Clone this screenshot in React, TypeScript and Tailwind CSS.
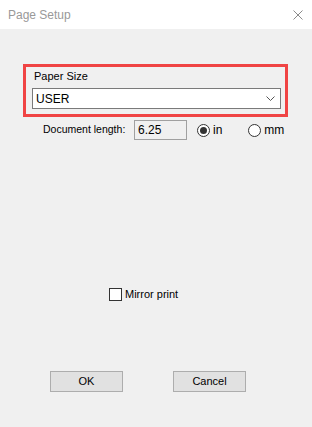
export default function App() {
  return (
    <div
      className="w-[312px] h-[427px] bg-[#f0f0f0] flex flex-col text-[11px] text-black"
      style={{ fontFamily: '"Liberation Sans", Arial, sans-serif' }}
    >
      <div className="h-[29px] bg-white flex items-center justify-between pl-[8px] pr-[9px]">
        <span className="text-[12px] text-[#999999]">Page Setup</span>
        <svg width="10" height="10" viewBox="0 0 10 10" className="text-[#8a8a8a]">
          <path d="M0.5 0.5 L9.5 9.5 M9.5 0.5 L0.5 9.5" stroke="currentColor" strokeWidth="1" />
        </svg>
      </div>

      <div className="ml-[23px] mt-[35px] w-[265px] h-[53px] border-[3px] border-[#f04444] flex flex-col">
        <div className="pl-[8px] pt-[3px] h-[21px] leading-[13px]">Paper Size</div>
        <div className="ml-[6px] w-[249px] h-[21px] bg-white border border-[#7a7a7a] flex items-center justify-between pl-[3px] pr-[5px]">
          <span className="text-[12px]">USER</span>
          <svg width="9" height="6" viewBox="0 0 9 6">
            <path d="M0.5 0.5 L4.5 4.5 L8.5 0.5" stroke="#555" strokeWidth="1" fill="none" />
          </svg>
        </div>
      </div>

      <div className="mt-[3px] h-[20px] flex items-center">
        <span className="ml-[43px] w-[91px] text-[10.5px]">Document length:</span>
        <div className="w-[53px] h-[20px] border border-[#a0a0a0] bg-[#f0f0f0] flex items-center pl-[3px] text-[12px]">
          6.25
        </div>
        <div className="ml-[10px] w-[13px] h-[13px] rounded-full border border-[#333] bg-white flex items-center justify-center">
          <div className="w-[7px] h-[7px] rounded-full bg-[#333]" />
        </div>
        <span className="ml-[3px] text-[12px]">in</span>
        <div className="ml-[26px] w-[13px] h-[13px] rounded-full border border-[#333] bg-white" />
        <span className="ml-[3px] text-[12px]">mm</span>
      </div>

      <div className="mt-[148px] h-[13px] flex items-center">
        <div className="ml-[109px] w-[13px] h-[13px] border border-[#333] bg-white" />
        <span className="ml-[3px]">Mirror print</span>
      </div>

      <div className="mt-[70px] flex">
        <div className="ml-[50px] w-[73px] h-[21px] border border-[#adadad] bg-[#e1e1e1] flex items-center justify-center">
          OK
        </div>
        <div className="ml-[50px] w-[73px] h-[21px] border border-[#adadad] bg-[#e1e1e1] flex items-center justify-center">
          Cancel
        </div>
      </div>
    </div>
  );
}
